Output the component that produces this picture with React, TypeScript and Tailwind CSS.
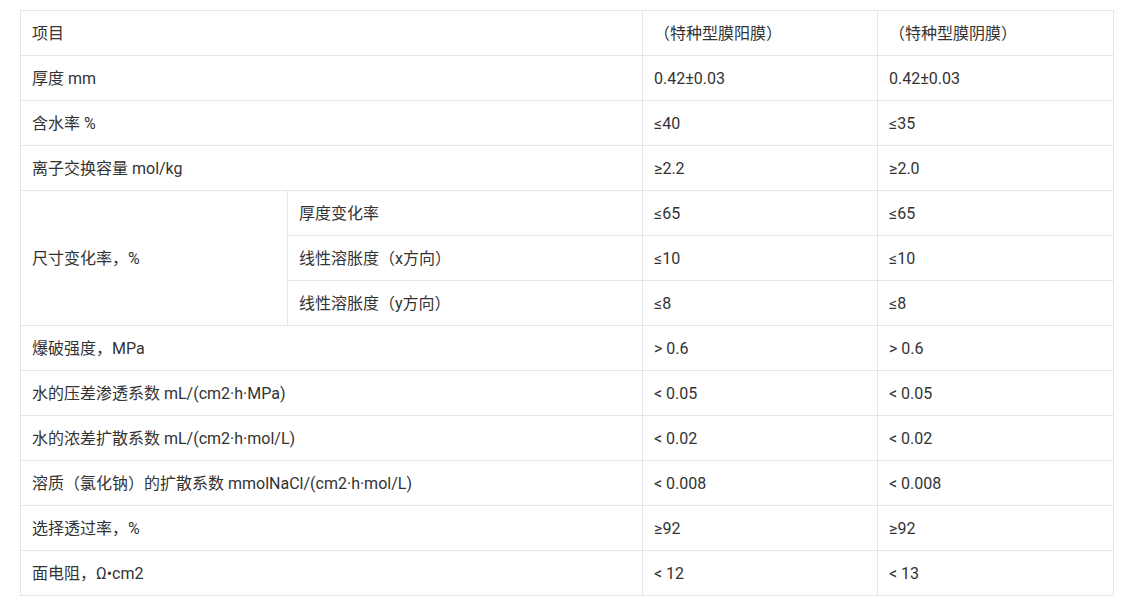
import React from "react";

const rows: [string, string, string][] = [
  ["爆破强度，MPa", "> 0.6", "> 0.6"],
  ["水的压差渗透系数 mL/(cm2·h·MPa)", "< 0.05", "< 0.05"],
  ["水的浓差扩散系数 mL/(cm2·h·mol/L)", "< 0.02", "< 0.02"],
  ["溶质（氯化钠）的扩散系数 mmolNaCl/(cm2·h·mol/L)", "< 0.008", "< 0.008"],
  ["选择透过率，%", "≥92", "≥92"],
  ["面电阻，Ω•cm2", "< 12", "< 13"],
];

const top: [string, string, string][] = [
  ["项目", "（特种型膜阳膜）", "（特种型膜阴膜）"],
  ["厚度 mm", "0.42±0.03", "0.42±0.03"],
  ["含水率 %", "≤40", "≤35"],
  ["离子交换容量 mol/kg", "≥2.2", "≥2.0"],
];

const sub: [string, string, string][] = [
  ["厚度变化率", "≤65", "≤65"],
  ["线性溶胀度（x方向）", "≤10", "≤10"],
  ["线性溶胀度（y方向）", "≤8", "≤8"],
];

const td = "border border-[#e5e5e5] px-[11px] pt-[2px] align-middle";

export default function App() {
  return (
    <div
      className="bg-white w-[1136px] h-[611px] pt-[10px] pl-[20px] text-[16px] text-[#333]"
      style={{ fontFamily: 'Roboto, "Noto Sans CJK SC", sans-serif' }}
    >
      <table className="border-collapse border border-[#e5e5e5] w-[1093px] table-fixed">
        <colgroup>
          <col className="w-[267px]" />
          <col className="w-[355px]" />
          <col className="w-[235px]" />
          <col className="w-[236px]" />
        </colgroup>
        <tbody>
          {top.map((r, i) => (
            <tr key={i} className="h-[45px]">
              <td className={td} colSpan={2}>{r[0]}</td>
              <td className={td}>{r[1]}</td>
              <td className={td}>{r[2]}</td>
            </tr>
          ))}
          {sub.map((r, i) => (
            <tr key={"s" + i} className="h-[45px]">
              {i === 0 && (
                <td className={td} rowSpan={3}>尺寸变化率，%</td>
              )}
              <td className={td}>{r[0]}</td>
              <td className={td}>{r[1]}</td>
              <td className={td}>{r[2]}</td>
            </tr>
          ))}
          {rows.map((r, i) => (
            <tr key={"r" + i} className="h-[45px]">
              <td className={td} colSpan={2}>{r[0]}</td>
              <td className={td}>{r[1]}</td>
              <td className={td}>{r[2]}</td>
            </tr>
          ))}
        </tbody>
      </table>
    </div>
  );
}
